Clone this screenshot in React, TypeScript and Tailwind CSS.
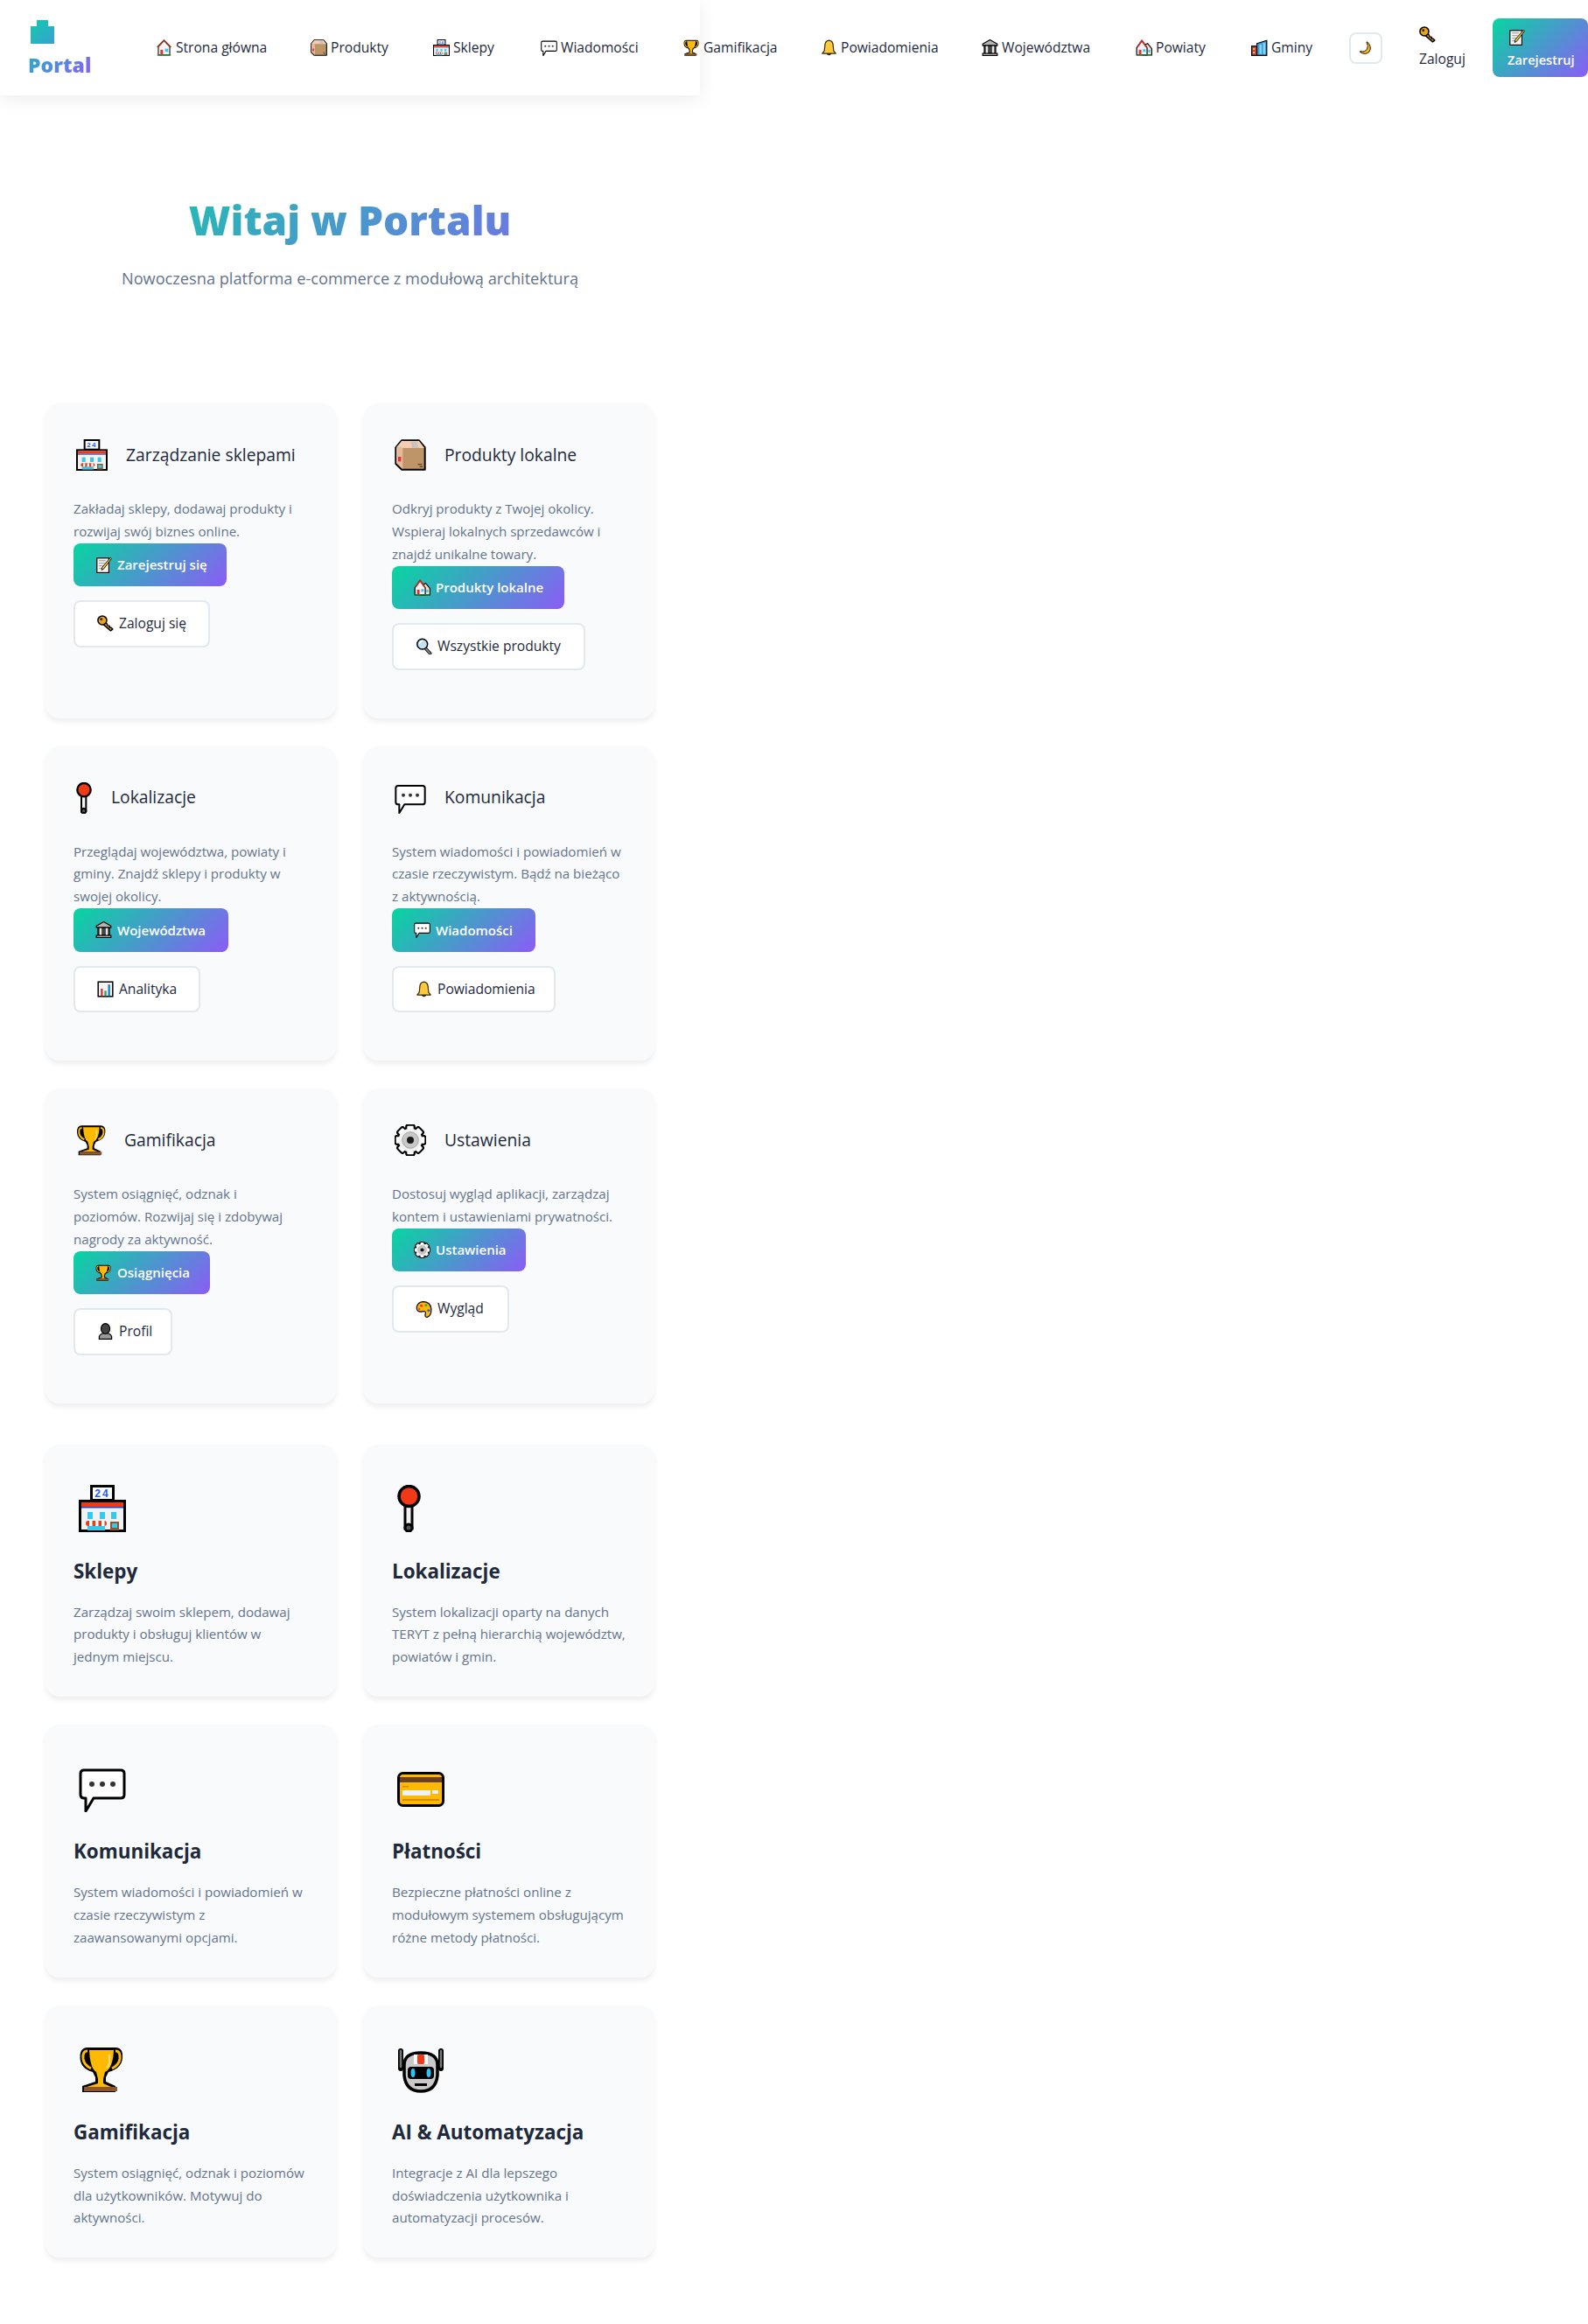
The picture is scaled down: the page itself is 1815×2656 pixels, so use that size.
import React from "react";

type IconProps = { className?: string };

// Emoji drawn by hand, there is no colour emoji font on the page
const Shop = ({ className }: IconProps) => (
  <svg viewBox="0 0 54 54" className={className}>
    <rect x="14.5" y="1.5" width="25" height="16" fill="#fff" stroke="#000" strokeWidth="3" />
    <text x="27" y="14" textAnchor="middle" fontSize="12" fontWeight="700" fill="#1a5cff" fontFamily="Liberation Sans, sans-serif" letterSpacing="2">24</text>
    <rect x="1.5" y="18.5" width="51" height="34" fill="#f2f2f2" stroke="#000" strokeWidth="3" />
    <rect x="3" y="20" width="48" height="5" fill="#f03a17" />
    <rect x="3" y="25" width="48" height="1.5" fill="#0a4fe0" />
    <rect x="10" y="31" width="6" height="8" fill="#35c9f0" />
    <rect x="24" y="31" width="6" height="8" fill="#35c9f0" />
    <rect x="37" y="31" width="6" height="8" fill="#35c9f0" />
    <rect x="10" y="45" width="20" height="7" fill="#35c9f0" />
    <rect x="8" y="41" width="24" height="6" rx="3" fill="#f03a17" />
    <rect x="12" y="41" width="3.5" height="6" fill="#fff" />
    <rect x="19" y="41" width="3.5" height="6" fill="#fff" />
    <rect x="26" y="41" width="3.5" height="6" fill="#fff" />
    <rect x="36" y="42" width="10" height="10" fill="#8e562e" />
    <rect x="38" y="44" width="6" height="5" fill="#35c9f0" />
  </svg>
);

const Box = ({ className }: IconProps) => (
  <svg viewBox="0 0 54 54" className={className}>
    <path d="M2 14 L12 2 L42 2 L52 14 L52 52 L12 52 L2 42 Z" fill="#bd9569" stroke="#000" strokeWidth="3" strokeLinejoin="round" />
    <path d="M3 14 L12 3 L42 3 L51 15 L14 15 Z" fill="#f2cdb3" />
    <path d="M3 14 L14 15 L14 51 L3 41 Z" fill="#e4ba98" />
    <path d="M28 4 L38 4 L42 15 L30 15 Z" fill="#c9c4be" />
    <rect x="6" y="30" width="5" height="8" fill="#e0343a" />
    <rect x="40" y="42" width="7" height="2" fill="#5d4228" />
    <rect x="43" y="46" width="5" height="2" fill="#5d4228" />
  </svg>
);

const Pin = ({ className }: IconProps) => (
  <svg viewBox="0 0 54 54" className={className}>
    <rect x="9" y="20" width="8" height="30" fill="#f2f2f2" stroke="#000" strokeWidth="3" />
    <circle cx="13" cy="49" r="4" fill="#555" stroke="#000" strokeWidth="3" />
    <ellipse cx="13.5" cy="13" rx="11.5" ry="11.5" fill="#f03a17" stroke="#000" strokeWidth="3.5" />
  </svg>
);

const Chat = ({ className }: IconProps) => (
  <svg viewBox="0 0 54 54" className={className}>
    <path d="M6 6 L48 6 Q52 6 52 10 L52 34 Q52 38 48 38 L17 38 L8 53 L8 38 L6 38 Q2 38 2 34 L2 10 Q2 6 6 6 Z" fill="#fff" stroke="#000" strokeWidth="3" strokeLinejoin="round" />
    <circle cx="15" cy="22" r="3" fill="#333" />
    <circle cx="27" cy="22" r="3" fill="#333" />
    <circle cx="39" cy="22" r="3" fill="#333" />
  </svg>
);

const Trophy = ({ className }: IconProps) => (
  <svg viewBox="0 0 54 54" className={className}>
    <path d="M10 2 L42 2 Q51 2 50 14 Q49 26 34 30 L31 36 L31 41 L42 46 L42 53 L4 53 L4 46 L19 41 L19 36 L16 30 Q2 26 1.5 14 Q1 2 10 2 Z" fill="#000" />
    <path d="M12 5 L40 5 Q39 26 30 30 L28 38 L28 43 L37 47 L9 47 L22 43 L22 38 L20 30 Q13 26 12 5 Z" fill="#ffb900" />
    <path d="M10 6 Q4 6 5 15 Q6 22 14 26" fill="none" stroke="#ffb900" strokeWidth="3" />
    <path d="M42 6 Q48 6 47 15 Q46 22 38 26" fill="none" stroke="#ffb900" strokeWidth="3" />
    <rect x="6" y="47" width="38" height="5" fill="#8e562e" />
    <path d="M35 10 L35 20 Q34 24 32 25" fill="none" stroke="#ffe08a" strokeWidth="2" />
  </svg>
);

const Gear = ({ className }: IconProps) => (
  <svg viewBox="0 0 54 54" className={className}>
    {[0, 45, 90, 135, 180, 225, 270, 315].map((a) => (
      <rect key={a} x="20" y="1" width="14" height="52" rx="3" fill="#fff" stroke="#000" strokeWidth="3" transform={`rotate(${a} 27 27)`} />
    ))}
    <circle cx="27" cy="27" r="20" fill="#f2f2f2" />
    <circle cx="27" cy="27" r="14" fill="#c8c8c8" stroke="#8a8a8a" strokeWidth="1" />
    <circle cx="27" cy="27" r="6" fill="#1a1a1a" />
  </svg>
);

const CreditCard = ({ className }: IconProps) => (
  <svg viewBox="0 0 54 54" className={className}>
    <rect x="1.5" y="9.5" width="51" height="37" rx="5" fill="#ffb900" stroke="#000" strokeWidth="3" />
    <rect x="3" y="14" width="48" height="6" fill="#6b3f22" />
    <rect x="6" y="24" width="7" height="1.5" fill="#d48c00" />
    <rect x="6" y="29" width="32" height="6" fill="#eef2f8" />
    <rect x="40" y="29" width="7" height="4" fill="#eef2f8" />
    <rect x="6" y="39" width="42" height="2" fill="#d48c00" />
  </svg>
);

const Robot = ({ className }: IconProps) => (
  <svg viewBox="0 0 54 54" className={className}>
    <path d="M4 6 L4 26 M50 6 L50 26" stroke="#000" strokeWidth="6" strokeLinecap="round" />
    <path d="M4 6 L4 24 M50 6 L50 24" stroke="#777" strokeWidth="2.5" strokeLinecap="round" />
    <path d="M8 22 Q8 8 27 8 Q46 8 46 22 L46 34 Q44 52 27 52 Q10 52 8 34 Z" fill="#c9c9c9" stroke="#000" strokeWidth="3.5" />
    <rect x="23" y="10" width="8" height="11" rx="2" fill="#f03a17" />
    <rect x="19" y="10" width="4" height="11" fill="#fff" />
    <rect x="31" y="10" width="4" height="11" fill="#fff" />
    <rect x="12" y="24" width="30" height="14" rx="4" fill="#000" />
    <ellipse cx="18" cy="31" rx="2.5" ry="5" fill="#2cc4f2" />
    <ellipse cx="36" cy="31" rx="2.5" ry="5" fill="#2cc4f2" />
    <rect x="20" y="43" width="14" height="3" fill="#000" />
  </svg>
);

const Home = ({ className }: IconProps) => (
  <svg viewBox="0 0 32 32" className={className}>
    <path d="M5 14 L16 2 L27 14 L27 30 L5 30 Z" fill="#f4f4f4" stroke="#3a1a10" strokeWidth="2" strokeLinejoin="round" />
    <path d="M3 15 L16 2 L29 15" fill="none" stroke="#8e3a22" strokeWidth="3" />
    <rect x="9" y="20" width="5" height="10" fill="#e0343a" />
    <rect x="18" y="18" width="6" height="6" fill="#35c9f0" />
    <rect x="3" y="29" width="26" height="2.5" fill="#1f8a3a" />
  </svg>
);

const Bell = ({ className }: IconProps) => (
  <svg viewBox="0 0 32 32" className={className}>
    <path d="M16 2 Q8 3 8 13 L7 22 L3 27 L29 27 L25 22 L24 13 Q24 3 16 2 Z" fill="#ffc83d" stroke="#3a2a00" strokeWidth="2" strokeLinejoin="round" />
    <path d="M12 28 Q16 32 20 28 Z" fill="#333" stroke="#000" />
  </svg>
);

const Bank = ({ className }: IconProps) => (
  <svg viewBox="0 0 32 32" className={className}>
    <path d="M16 1 L30 9 L30 12 L2 12 L2 9 Z" fill="#b5b5b5" stroke="#000" strokeWidth="2" strokeLinejoin="round" />
    <rect x="5" y="12" width="22" height="15" fill="#444" stroke="#000" strokeWidth="2" />
    <rect x="8" y="13" width="4" height="14" fill="#e8e8e8" />
    <rect x="20" y="13" width="4" height="14" fill="#e8e8e8" />
    <rect x="2" y="27" width="28" height="4" fill="#c8c8c8" stroke="#000" strokeWidth="2" />
  </svg>
);

const Houses = ({ className }: IconProps) => (
  <svg viewBox="0 0 32 32" className={className}>
    <path d="M14 12 L23 8 L31 18 L31 30 L14 30 Z" fill="#f4e4d4" stroke="#000" strokeWidth="2" />
    <path d="M2 16 L12 2 L22 16 L22 30 L2 30 Z" fill="#f4f4f4" stroke="#000" strokeWidth="2" strokeLinejoin="round" />
    <path d="M3 15 L12 3 L21 15" fill="none" stroke="#c0302a" strokeWidth="3" />
    <rect x="6" y="20" width="5" height="10" fill="#e0343a" />
    <rect x="14" y="19" width="5" height="5" fill="#35c9f0" />
    <rect x="24" y="20" width="4" height="5" fill="#35c9f0" />
    <rect x="1" y="29" width="30" height="2" fill="#1f8a3a" />
  </svg>
);

const City = ({ className }: IconProps) => (
  <svg viewBox="0 0 32 32" className={className}>
    <rect x="1" y="13" width="12" height="18" fill="#c8452e" stroke="#000" strokeWidth="2" />
    <path d="M11 8 L30 2 L30 31 L11 31 Z" fill="#3aa0e0" stroke="#000" strokeWidth="2" />
    <rect x="16" y="10" width="4" height="18" fill="#8ad4f5" />
    <rect x="23" y="7" width="4" height="21" fill="#8ad4f5" />
    <rect x="4" y="17" width="3" height="3" fill="#ffd9a0" />
    <rect x="4" y="24" width="3" height="3" fill="#ffd9a0" />
  </svg>
);

const Moon = ({ className }: IconProps) => (
  <svg viewBox="0 0 32 32" className={className}>
    <path d="M20 2 Q31 14 24 24 Q16 33 3 25 Q2 23 4 23 Q14 26 19 18 Q23 11 18 3 Q18 1 20 2 Z" fill="#f7b52c" stroke="#2a1a00" strokeWidth="2" strokeLinejoin="round" />
  </svg>
);

const Key = ({ className }: IconProps) => (
  <svg viewBox="0 0 32 32" className={className}>
    <path d="M12 18 L26 30 L30 27 L27 24 L24 24 L24 21 L20 20 L19 17 L17 14" fill="#e8a317" stroke="#000" strokeWidth="2.5" strokeLinejoin="round" />
    <circle cx="10" cy="10" r="8.5" fill="#e8a317" stroke="#000" strokeWidth="2.5" />
    <circle cx="8" cy="8" r="2.5" fill="#3a2a00" />
  </svg>
);

const Memo = ({ className }: IconProps) => (
  <svg viewBox="0 0 32 32" className={className}>
    <rect x="3" y="3" width="23" height="28" fill="#f4f4f4" stroke="#000" strokeWidth="2" />
    <path d="M7 8 H20 M7 13 H18 M7 18 H15 M7 23 H13" stroke="#888" strokeWidth="1.5" />
    <path d="M29 2 L31 4 L16 24 L12 26 L13 21 Z" fill="#ffc83d" stroke="#000" strokeWidth="1.5" strokeLinejoin="round" />
  </svg>
);

const Magnifier = ({ className }: IconProps) => (
  <svg viewBox="0 0 32 32" className={className}>
    <path d="M19 20 L28 30" stroke="#000" strokeWidth="6" strokeLinecap="round" />
    <path d="M19 20 L28 30" stroke="#8a8f96" strokeWidth="3" strokeLinecap="round" />
    <circle cx="13" cy="12" r="10" fill="#bfe3f5" stroke="#000" strokeWidth="2.5" />
    <path d="M7 12 Q8 7 13 6" fill="none" stroke="#fff" strokeWidth="2" />
  </svg>
);

const Chart = ({ className }: IconProps) => (
  <svg viewBox="0 0 32 32" className={className}>
    <rect x="2" y="2" width="28" height="28" fill="#f4f4f4" stroke="#000" strokeWidth="2.5" />
    <rect x="7" y="15" width="4" height="14" fill="#e0343a" />
    <rect x="14" y="19" width="4" height="10" fill="#2fa84f" />
    <rect x="21" y="7" width="4" height="22" fill="#1a7ae0" />
  </svg>
);

const Person = ({ className }: IconProps) => (
  <svg viewBox="0 0 32 32" className={className}>
    <path d="M4 31 L4 26 Q6 20 16 19 Q26 20 28 26 L28 31 Z" fill="#9a9a9a" stroke="#000" strokeWidth="2" />
    <ellipse cx="16" cy="11" rx="8.5" ry="10" fill="#444" stroke="#000" strokeWidth="2" />
  </svg>
);

const Palette = ({ className }: IconProps) => (
  <svg viewBox="0 0 32 32" className={className}>
    <path d="M14 1 Q28 1 30 14 Q31 28 22 31 Q17 31 19 24 Q20 18 13 20 Q2 22 2 12 Q4 2 14 1 Z" fill="#ffb900" stroke="#000" strokeWidth="2" strokeLinejoin="round" />
    <circle cx="11" cy="9" r="2.5" fill="#e0343a" />
    <circle cx="20" cy="8" r="2.5" fill="#2fa84f" />
    <circle cx="25" cy="18" r="2.5" fill="#1a5cff" />
    <circle cx="7" cy="15" r="2" fill="#f03a17" />
  </svg>
);

const LogoMark = () => (
  <svg viewBox="0 0 27 27" className="w-[27px] h-[27px]">
    <defs>
      <linearGradient id="logoFill" x1="0" y1="0" x2="1" y2="1">
        <stop offset="0" stopColor="#0fcbaf" />
        <stop offset="1" stopColor="#3ba0cf" />
      </linearGradient>
    </defs>
    <path d="M7 0 H20 V7 H27 V27 H0 V7 H7 Z" fill="url(#logoFill)" />
  </svg>
);

type Icon = React.FC<IconProps>;

const navLinks: { label: string; icon: Icon; width: string }[] = [
  { label: "Strona główna", icon: Home, width: "w-[177px]" },
  { label: "Produkty", icon: Box, width: "w-[140px]" },
  { label: "Sklepy", icon: Shop, width: "w-[123px]" },
  { label: "Wiadomości", icon: Chat, width: "w-[163px]" },
  { label: "Gamifikacja", icon: Trophy, width: "w-[157px]" },
  { label: "Powiadomienia", icon: Bell, width: "w-[184px]" },
  { label: "Województwa", icon: Bank, width: "w-[176px]" },
  { label: "Powiaty", icon: Houses, width: "w-[132px]" },
  { label: "Gminy", icon: City, width: "w-[112px]" },
];

type Action = { label: string; icon: Icon; width: string };

const moduleCards: {
  title: string;
  icon: Icon;
  titleGap: string;
  text: string;
  primary: Action;
  secondary: Action;
}[] = [
  {
    title: "Zarządzanie sklepami",
    icon: Shop,
    titleGap: "w-[60px]",
    text: "Zakładaj sklepy, dodawaj produkty i rozwijaj swój biznes online.",
    primary: { label: "Zarejestruj się", icon: Memo, width: "w-[175px]" },
    secondary: { label: "Zaloguj się", icon: Key, width: "w-[156px]" },
  },
  {
    title: "Produkty lokalne",
    icon: Box,
    titleGap: "w-[60px]",
    text: "Odkryj produkty z Twojej okolicy. Wspieraj lokalnych sprzedawców i znajdź unikalne towary.",
    primary: { label: "Produkty lokalne", icon: Houses, width: "w-[197px]" },
    secondary: { label: "Wszystkie produkty", icon: Magnifier, width: "w-[221px]" },
  },
  {
    title: "Lokalizacje",
    icon: Pin,
    titleGap: "w-[43px]",
    text: "Przeglądaj województwa, powiaty i gminy. Znajdź sklepy i produkty w swojej okolicy.",
    primary: { label: "Województwa", icon: Bank, width: "w-[177px]" },
    secondary: { label: "Analityka", icon: Chart, width: "w-[145px]" },
  },
  {
    title: "Komunikacja",
    icon: Chat,
    titleGap: "w-[60px]",
    text: "System wiadomości i powiadomień w czasie rzeczywistym. Bądź na bieżąco z aktywnością.",
    primary: { label: "Wiadomości", icon: Chat, width: "w-[164px]" },
    secondary: { label: "Powiadomienia", icon: Bell, width: "w-[187px]" },
  },
  {
    title: "Gamifikacja",
    icon: Trophy,
    titleGap: "w-[58px]",
    // line break as in the original, the font here runs a bit narrower
    text: "System osiągnięć, odznak i\npoziomów. Rozwijaj się i zdobywaj nagrody za aktywność.",
    primary: { label: "Osiągnięcia", icon: Trophy, width: "w-[156px]" },
    secondary: { label: "Profil", icon: Person, width: "w-[113px]" },
  },
  {
    title: "Ustawienia",
    icon: Gear,
    titleGap: "w-[60px]",
    text: "Dostosuj wygląd aplikacji, zarządzaj kontem i ustawieniami prywatności.",
    primary: { label: "Ustawienia", icon: Gear, width: "w-[153px]" },
    secondary: { label: "Wygląd", icon: Palette, width: "w-[134px]" },
  },
];

const featureCards: { title: string; icon: Icon; text: string }[] = [
  { title: "Sklepy", icon: Shop, text: "Zarządzaj swoim sklepem, dodawaj produkty i obsługuj klientów w jednym miejscu." },
  { title: "Lokalizacje", icon: Pin, text: "System lokalizacji oparty na danych TERYT z pełną hierarchią województw, powiatów i gmin." },
  { title: "Komunikacja", icon: Chat, text: "System wiadomości i powiadomień w czasie rzeczywistym z zaawansowanymi opcjami." },
  { title: "Płatności", icon: CreditCard, text: "Bezpieczne płatności online z modułowym systemem obsługującym różne metody płatności." },
  { title: "Gamifikacja", icon: Trophy, text: "System osiągnięć, odznak i poziomów dla użytkowników. Motywuj do aktywności." },
  { title: "AI & Automatyzacja", icon: Robot, text: "Integracje z AI dla lepszego doświadczenia użytkownika i automatyzacji procesów." },
];

const Navbar = () => (
  <nav className="w-[800px] h-[109px] bg-white shadow-[0_4px_20px_rgba(0,0,0,0.08)] flex items-center pl-8 text-[15.6px] text-[#1e293b]">
    <div className="w-[146px] shrink-0 flex flex-col">
      <div className="ml-[3px] h-[27px] mt-[3px]">
        <LogoMark />
      </div>
      <span className="w-fit mt-[8px] text-[23px] leading-[32px] font-extrabold text-transparent bg-clip-text bg-[linear-gradient(135deg,#26b1c4,#8b5cf6)]">
        Portal
      </span>
    </div>
    {navLinks.map((link) => (
      <a key={link.label} className={`${link.width} shrink-0 flex items-center mt-[1px]`}>
        <link.icon className="w-[19px] h-[19px] mr-[4px] shrink-0" />
        <span className="whitespace-nowrap">{link.label}</span>
      </a>
    ))}
    <button className="w-[38px] h-[36px] shrink-0 rounded-lg border-2 border-[#e2e8f0] flex items-center justify-center">
      <Moon className="w-[16px] h-[16px]" />
    </button>
    <div className="w-[126px] pl-[42px] shrink-0 flex flex-col items-start">
      <Key className="w-[19px] h-[19px] mb-[6px]" />
      <span className="text-[15.6px] leading-[24px]">Zaloguj</span>
    </div>
    <div className="w-[109px] h-[67px] shrink-0 rounded-lg pl-[17px] pt-3 flex flex-col items-start text-[14.6px] text-white font-semibold bg-[linear-gradient(135deg,#06d6a0,#8b5cf6)]">
      <Memo className="w-[19px] h-[19px] mb-[4px] ml-[1px]" />
      <span className="leading-[24px]">Zarejestruj</span>
    </div>
  </nav>
);

const ModuleCard = ({ card }: { card: (typeof moduleCards)[number] }) => (
  <div className="bg-[#f8fafc] rounded-2xl shadow-[0_4px_6px_rgba(0,0,0,0.07)] px-8 pt-8 pb-[55px]">
    <div className="h-[54px] mb-[22px] flex items-center">
      <div className={`${card.titleGap} shrink-0`}>
        <card.icon className="w-[36px] h-[36px] ml-[3px]" />
      </div>
      <h3 className="text-[19.3px] font-medium text-[#1e293b]">{card.title}</h3>
    </div>
    <p className="whitespace-pre-line text-[15.1px] leading-[25.84px] text-[#64748b]">{card.text}</p>
    <div className="flex flex-col items-start gap-4">
      <a className={`${card.primary.width} h-[49.5px] rounded-lg pl-[25px] flex items-center text-[15px] font-semibold text-white bg-[linear-gradient(135deg,#06d6a0,#8b5cf6)]`}>
        <card.primary.icon className="w-[19px] h-[19px] mr-[6px] shrink-0" />
        {card.primary.label}
      </a>
      <a className={`${card.secondary.width} h-[53.5px] rounded-lg pl-[25px] flex items-center border-2 border-[#e2e8f0] bg-white text-[15.6px] text-[#1e293b]`}>
        <card.secondary.icon className="w-[19px] h-[19px] mr-[6px] shrink-0" />
        {card.secondary.label}
      </a>
    </div>
  </div>
);

const FeatureCard = ({ card }: { card: (typeof featureCards)[number] }) => (
  <div className="bg-[#f8fafc] rounded-2xl shadow-[0_4px_6px_rgba(0,0,0,0.07)] p-8">
    <div className="h-[82px] mb-[12px] flex items-center">
      <card.icon className="w-[54px] h-[54px] ml-[6px]" />
    </div>
    <h3 className="h-[38px] mb-[15px] text-[22.4px] leading-[38px] font-bold text-[#1e293b]">{card.title}</h3>
    <p className="text-[15.1px] leading-[25.84px] text-[#64748b]">{card.text}</p>
  </div>
);

export default function App() {
  return (
    <div className="w-[800px] min-h-[2656px] bg-white font-['Open_Sans',sans-serif]">
      <Navbar />
      <section className="pt-[112px] pb-[128px] px-8 text-center">
        <h1 className="h-[60px] text-[46px] leading-[60px] font-extrabold text-transparent bg-clip-text bg-[linear-gradient(135deg,#06d6a0,#8b5cf6)]">
          Witaj w Portalu
        </h1>
        <p className="mt-[22px] text-[18.2px] leading-[30px] text-[#64748b]">
          Nowoczesna platforma e-commerce z modułową architekturą
        </p>
      </section>
      <section className="px-[52px]">
        <div className="grid grid-cols-2 gap-8">
          {moduleCards.map((card) => (
            <ModuleCard key={card.title} card={card} />
          ))}
        </div>
        <div className="mt-[47px] pb-[78px] grid grid-cols-2 gap-8">
          {featureCards.map((card) => (
            <FeatureCard key={card.title} card={card} />
          ))}
        </div>
      </section>
    </div>
  );
}
